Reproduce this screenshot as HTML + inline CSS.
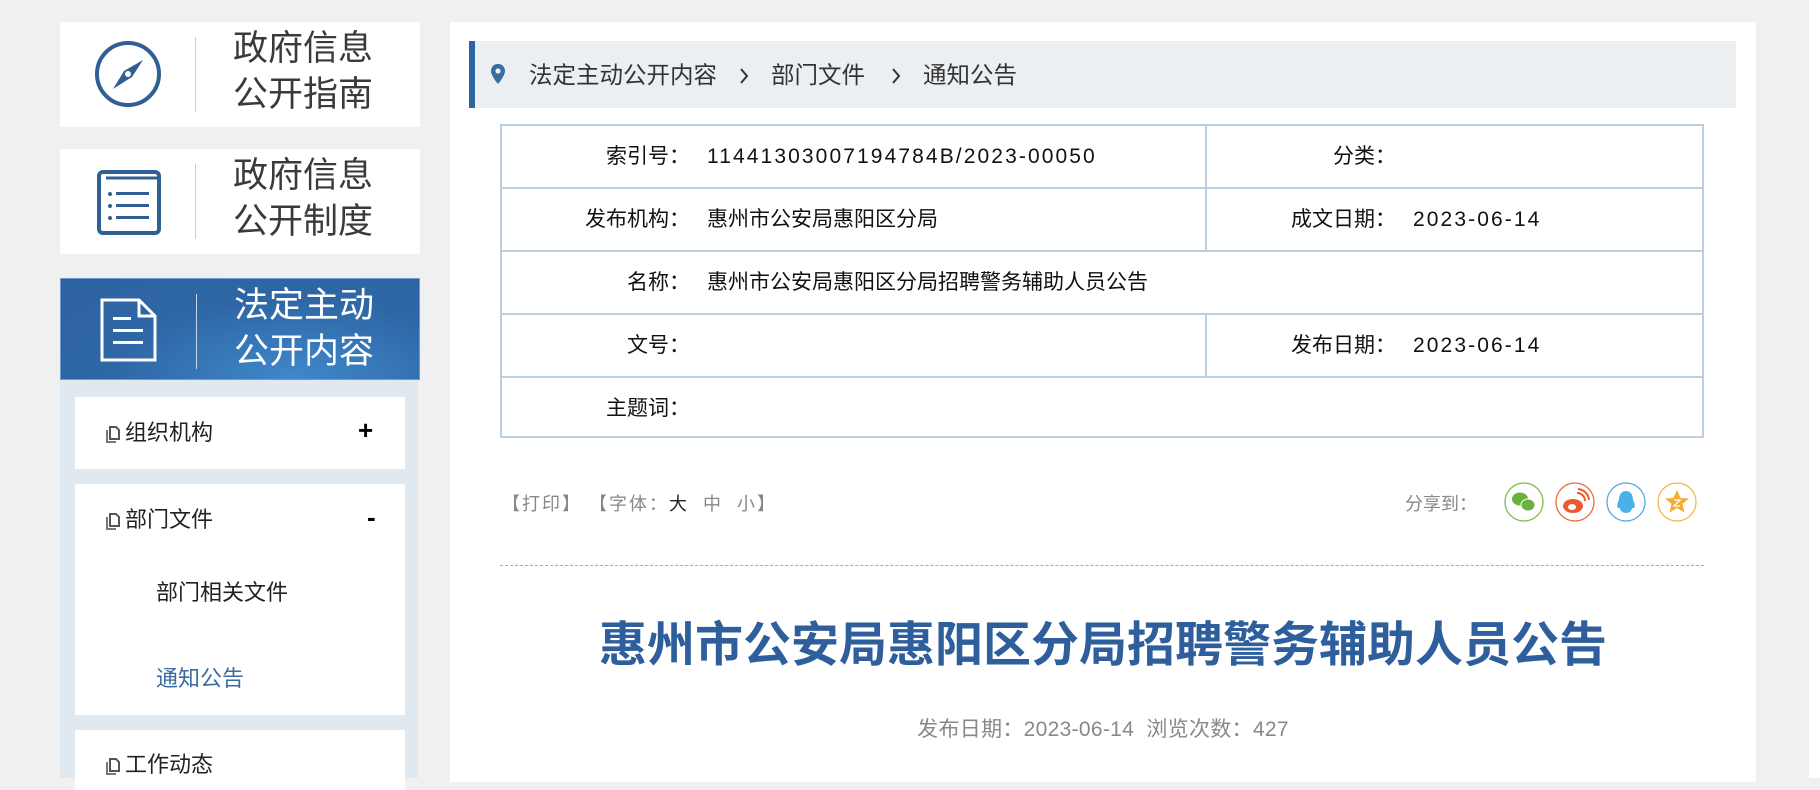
<!DOCTYPE html>
<html><head><meta charset="utf-8">
<style>
*{margin:0;padding:0;box-sizing:border-box}
body{width:1820px;height:778px;overflow:hidden;background:#f0f0f0;font-family:"Liberation Sans","Noto Sans CJK SC",sans-serif;position:relative}
.a{position:absolute}
.box{position:absolute;left:60px;width:360px;background:#fff}
.box .div{position:absolute;left:135px;top:15px;width:1px;height:75px;background:#ccc}
.box .t{position:absolute;left:173px;top:4px;font-size:35px;line-height:46px;color:#3a3a3a}
.mi{position:absolute;left:75px;width:330px;background:#fff}
.mt{position:absolute;left:55px;font-size:22px;color:#222;line-height:30px}
.ic{display:inline-block;vertical-align:middle;margin-right:4px}
.tb{position:absolute;left:500px;top:124px;width:1204px;height:314px;border:2px solid #bccfe0}
.row{position:absolute;left:0;width:1200px;height:63px;border-bottom:2px solid #bccfe0}
.row span{position:absolute;top:0;line-height:61px;font-size:21px;color:#111;white-space:nowrap}
.lb{right:1012px;text-align:right}
.v1{left:205px}
.lb2{right:306px;text-align:right}
.v2{left:911px}
.n{letter-spacing:2.1px}
.vd{position:absolute;left:703px;top:0;width:2px;height:61px;background:#bccfe0}
</style></head><body>
<!-- left -->
<div class="box" style="top:22px;height:105px">
 <svg class="a" style="left:34px;top:18px" width="68" height="68" viewBox="0 0 68 68"><circle cx="34" cy="34" r="31" fill="none" stroke="#2f5f93" stroke-width="4"/><path d="M49 20 L30 31 L19 49 L38 37 Z" fill="#2f5f93"/><circle cx="34" cy="34" r="3" fill="#fff"/></svg>
 <div class="div"></div><div class="t">政府信息<br>公开指南</div></div>
<div class="box" style="top:149px;height:105px">
 <svg class="a" style="left:36px;top:20px" width="66" height="66" viewBox="0 0 66 66"><rect x="3" y="3" width="60" height="61" rx="4" fill="none" stroke="#2f5f93" stroke-width="4"/><line x1="10" y1="9" x2="62" y2="9" stroke="#2f5f93" stroke-width="3"/><g fill="#2f5f93"><circle cx="14" cy="25" r="2"/><circle cx="14" cy="37" r="2"/><circle cx="14" cy="49" r="2"/><rect x="20" y="23" width="33" height="3"/><rect x="20" y="35" width="33" height="3"/><rect x="20" y="47" width="33" height="3"/></g></svg>
 <div class="div"></div><div class="t">政府信息<br>公开制度</div></div>
<div class="box" style="top:278px;height:102px;background:radial-gradient(ellipse at 65% 100%,#3f88cb 0%,#2f67a6 55%,#2c61a0 100%);border:1px solid #6d9ccc">
 <svg class="a" style="left:38px;top:18px" width="60" height="66" viewBox="0 0 60 66"><path d="M3 3 H40 L56 19 V63 H3 Z" fill="none" stroke="#fff" stroke-width="3"/><path d="M40 3 V19 H56" fill="none" stroke="#fff" stroke-width="3"/><g fill="#fff"><rect x="14" y="20" width="18" height="3"/><rect x="14" y="32" width="30" height="3"/><rect x="14" y="44" width="30" height="3"/></g></svg>
 <div class="div" style="background:#c7d8ea"></div><div class="t" style="color:#fff">法定主动<br>公开内容</div></div>
<div class="a" style="left:60px;top:380px;width:358px;height:398px;background:#dfe9ef"></div>
<svg width="0" height="0" style="position:absolute"><defs><symbol id="cp" viewBox="0 0 16 18"><path d="M5 2 H11 L14 5 V14 H5 Z" fill="none" stroke="#555" stroke-width="2"/><path d="M2 5 V17 H11" fill="none" stroke="#777" stroke-width="2"/></symbol></defs></svg>
<div class="mi" style="top:397px;height:72px"><div class="mt" style="top:21px;left:30px"><svg class="ic" width="16" height="18"><use href="#cp"/></svg>组织机构</div><div class="a" style="left:283px;top:18px;font-size:26px;font-weight:bold">+</div></div>
<div class="mi" style="top:484px;height:231px"><div class="mt" style="top:21px;left:30px"><svg class="ic" width="16" height="18"><use href="#cp"/></svg>部门文件</div><div class="a" style="left:292px;top:18px;font-size:26px;font-weight:bold">-</div>
 <div class="mt" style="top:94px;left:81px">部门相关文件</div>
 <div class="mt" style="top:180px;left:81px;color:#3c6b9e">通知公告</div></div>
<div class="mi" style="top:730px;height:60px"><div class="mt" style="top:20px;left:30px"><svg class="ic" width="16" height="18"><use href="#cp"/></svg>工作动态</div></div>
<!-- main -->
<div class="a" style="left:450px;top:22px;width:1306px;height:760px;background:#fff"></div>
<div class="a" style="left:1809px;top:0;width:11px;height:778px;background:#fff"></div>
<div class="a" style="left:469px;top:41px;width:1267px;height:67px;background:#eceff2;border-left:6px solid #2d64a0"></div>
<svg class="a" style="left:490px;top:63px" width="16" height="22" viewBox="0 0 16 22"><path d="M8 1 C3 1 1 5 1 8 C1 13 8 21 8 21 C8 21 15 13 15 8 C15 5 13 1 8 1 Z" fill="#3a6c9f"/><circle cx="8" cy="8" r="2.6" fill="#eceff2"/></svg>
<div class="a" style="left:529px;top:59px;font-size:23.5px;line-height:32px;color:#333;white-space:nowrap">法定主动公开内容</div>
<svg class="a" style="left:738px;top:67px" width="12" height="18" viewBox="0 0 12 18"><path d="M3 2 L9 9 L3 16" fill="none" stroke="#333" stroke-width="2"/></svg>
<div class="a" style="left:771px;top:59px;font-size:23.5px;line-height:32px;color:#333">部门文件</div>
<svg class="a" style="left:890px;top:67px" width="12" height="18" viewBox="0 0 12 18"><path d="M3 2 L9 9 L3 16" fill="none" stroke="#333" stroke-width="2"/></svg>
<div class="a" style="left:923px;top:59px;font-size:23.5px;line-height:32px;color:#333">通知公告</div>
<div class="tb">
 <div class="row" style="top:0"><span class="lb">索引号：</span><span class="v1 n">11441303007194784B/2023-00050</span><div class="vd"></div><span class="lb2">分类：</span></div>
 <div class="row" style="top:63px"><span class="lb">发布机构：</span><span class="v1">惠州市公安局惠阳区分局</span><div class="vd"></div><span class="lb2">成文日期：</span><span class="v2 n">2023-06-14</span></div>
 <div class="row" style="top:126px"><span class="lb">名称：</span><span class="v1">惠州市公安局惠阳区分局招聘警务辅助人员公告</span></div>
 <div class="row" style="top:189px"><span class="lb">文号：</span><div class="vd"></div><span class="lb2">发布日期：</span><span class="v2 n">2023-06-14</span></div>
 <div class="row" style="top:252px;border-bottom:none"><span class="lb">主题词：</span></div>
</div>
<div class="a" style="left:502px;top:490px;font-size:18px;color:#888;white-space:pre;letter-spacing:2px">【打印】 【字体：<span style="color:#222">大</span>&nbsp; 中&nbsp; 小】</div>
<div class="a" style="left:1405px;top:490px;font-size:18px;color:#888">分享到：</div>
<svg class="a" style="left:1504px;top:482px" width="200" height="42" viewBox="0 0 200 42">
 <circle cx="20" cy="20" r="19" fill="none" stroke="#7dbb55" stroke-width="1.3"/><ellipse cx="16" cy="17" rx="8" ry="6.5" fill="#6ab23d"/><ellipse cx="24" cy="23" rx="7" ry="6" fill="#6ab23d" stroke="#fff" stroke-width="1"/>
 <circle cx="71" cy="20" r="19" fill="none" stroke="#ea6b3c" stroke-width="1.3"/><ellipse cx="69" cy="24" rx="10" ry="7" fill="#ea5a2c"/><ellipse cx="68" cy="25" rx="4" ry="3" fill="#fff"/><path d="M73 11 A8 8 0 0 1 81 19 M74 7 A12 12 0 0 1 85 18" fill="none" stroke="#ea5a2c" stroke-width="2"/>
 <circle cx="122" cy="20" r="19" fill="none" stroke="#56a8dc" stroke-width="1.3"/><path d="M122 9 C116 9 115 15 115 18 C112 23 113 27 116 26 C116 29 119 31 122 31 C125 31 128 29 128 26 C131 27 132 23 129 18 C129 15 128 9 122 9 Z" fill="#4ab0e8"/>
 <circle cx="173" cy="20" r="19" fill="none" stroke="#f0b94a" stroke-width="1.3"/><path d="M173 8 L176.5 16 L185 16.5 L178.5 22 L180.5 30.5 L173 26 L165.5 30.5 L167.5 22 L161 16.5 L169.5 16 Z" fill="#f5ac2f"/><path d="M170 18 H176 L170 24 H176" fill="none" stroke="#fff" stroke-width="1.3"/>
</svg>
<div class="a" style="left:500px;top:565px;width:1204px;border-top:1px dashed #aaa"></div>
<div class="a" style="left:450px;top:613px;width:1306px;text-align:center;font-size:48px;line-height:66px;font-weight:bold;color:#2e5f9c">惠州市公安局惠阳区分局招聘警务辅助人员公告</div>
<div class="a" style="left:450px;top:713px;width:1306px;text-align:center;font-size:21px;color:#888;letter-spacing:0.3px">发布日期：2023-06-14&nbsp; 浏览次数：427</div>
</body></html>
